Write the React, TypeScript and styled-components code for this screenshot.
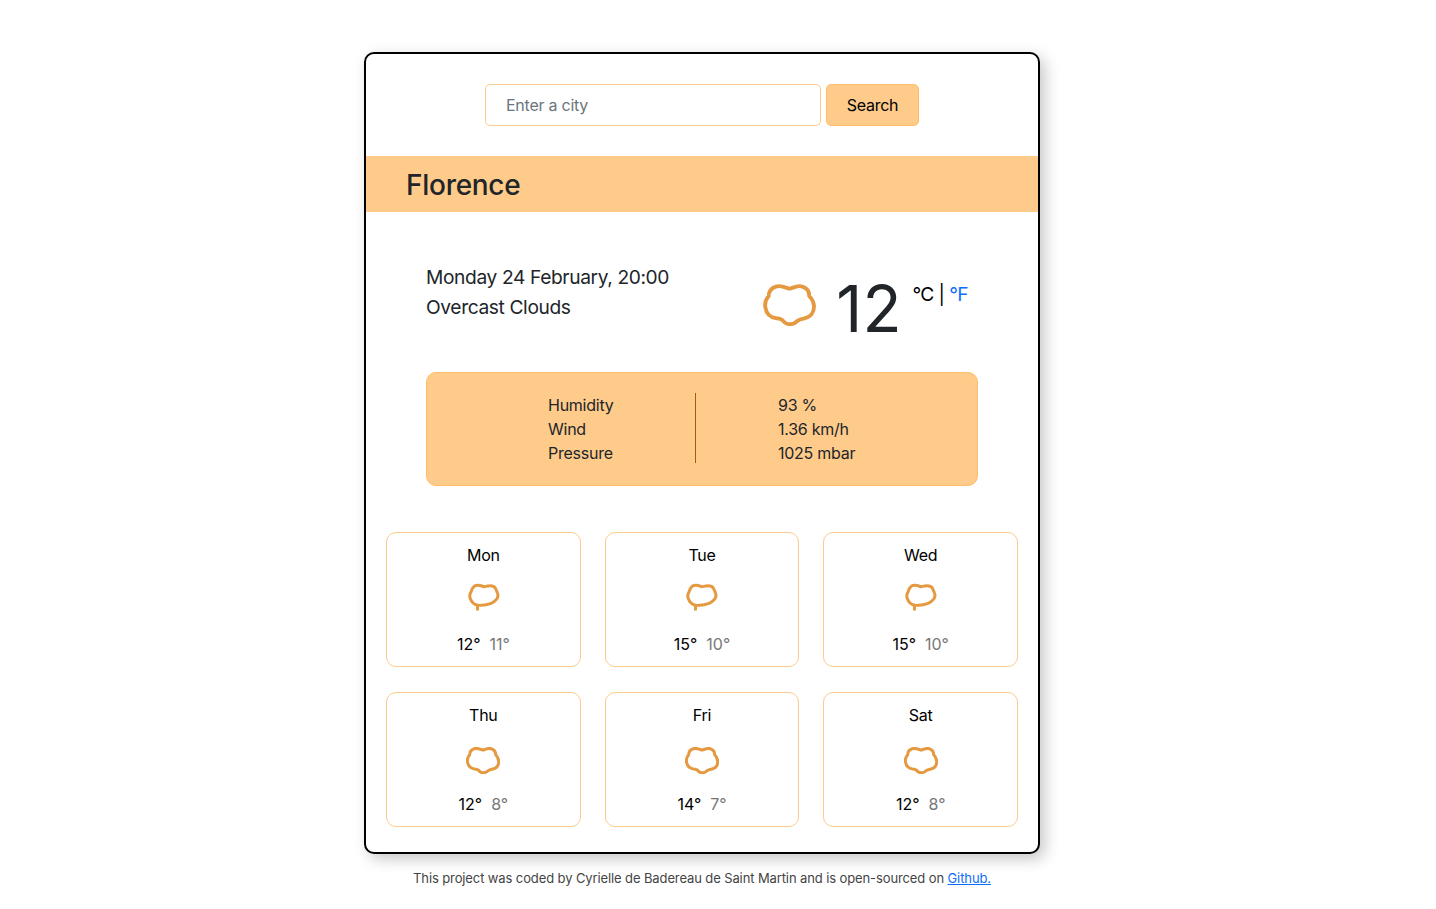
import React from 'react';
import styled, { createGlobalStyle } from 'styled-components';

interface Day {
  name: string;
  max: number;
  min: number;
  rainy?: boolean;
}

const days: Day[] = [
  { name: 'Mon', max: 12, min: 11, rainy: true },
  { name: 'Tue', max: 15, min: 10, rainy: true },
  { name: 'Wed', max: 15, min: 10, rainy: true },
  { name: 'Thu', max: 12, min: 8 },
  { name: 'Fri', max: 14, min: 7 },
  { name: 'Sat', max: 12, min: 8 },
];

const CloudIcon: React.FC<{ width: number; stroke: number }> = ({ width, stroke }) => (
  <svg width={width} height={(width * 126) / 158} viewBox="70 72 158 126" fill="none">
    <path
      d="M149 86C143 86 126 74 108 80C94 85 87 96 87 108C79 117 75 130 77 142C80 160 92 172 110 174C117 174 122 176 127 179C134 188 142 192 150 192C160 192 168 187 174 181C180 177 188 176 196 174C212 170 222 156 222 140C222 128 216 116 208 108C208 94 200 84 188 80C172 74 155 86 149 86Z"
      stroke="#e59a41"
      strokeWidth={stroke}
    />
  </svg>
);

const RainyCloudIcon: React.FC = () => (
  <svg width={33.3} height={29.3} viewBox="16.5 12 100 88" fill="none">
    <path
      d="M68 23C64 23 50 14 38 22C32 27 30 33 29 38C25 44 24 52 26 58C30 70 40 78 50 79C58 80 66 78 74 77C84 76 94 72 100 66C108 60 111 50 108 42C106 36 104 32 102 28C94 14 72 23 68 23Z"
      stroke="#e59a41"
      strokeWidth={9}
    />
    <path d="M48 80V91" stroke="#e59a41" strokeWidth={9} strokeLinecap="round" />
  </svg>
);

const App: React.FC = () => (
  <>
    <GlobalStyle />
    <Page>
      <Card>
        <SearchForm>
          <CityInput type="text" placeholder="Enter a city" />
          <SearchButton type="button">Search</SearchButton>
        </SearchForm>
        <CityBanner>Florence</CityBanner>
        <Current>
          <Summary>
            <div>Monday 24 February, 20:00</div>
            <div>Overcast Clouds</div>
          </Summary>
          <TempBlock>
            <TempIcon>
              <CloudIcon width={53} stroke={11.5} />
            </TempIcon>
            <Temp>12</Temp>
            <Units>
              °C | <UnitLink href="#">°F</UnitLink>
            </Units>
          </TempBlock>
        </Current>
        <InfoBox>
          <InfoLabels>
            <div>Humidity</div>
            <div>Wind</div>
            <div>Pressure</div>
          </InfoLabels>
          <InfoValues>
            <div>93 %</div>
            <div>1.36 km/h</div>
            <div>1025 mbar</div>
          </InfoValues>
        </InfoBox>
        <Forecast>
          {days.map((d) => (
            <DayCard key={d.name}>
              <DayName>{d.name}</DayName>
              <DayIcon $rainy={d.rainy}>
                {d.rainy ? <RainyCloudIcon /> : <CloudIcon width={34} stroke={14} />}
              </DayIcon>
              <DayTemps>
                <span>{d.max}°</span>
                <MinTemp>{d.min}°</MinTemp>
              </DayTemps>
            </DayCard>
          ))}
        </Forecast>
      </Card>
      <Footer>
        This project was coded by Cyrielle de Badereau de Saint Martin and is open-sourced on{' '}
        <a href="#">Github.</a>
      </Footer>
    </Page>
  </>
);

export default App;

const GlobalStyle = createGlobalStyle`
  * {
    box-sizing: border-box;
  }

  body {
    margin: 0;
    background: #fff;
    color: #212529;
    font-family: Inter, 'Liberation Sans', sans-serif;
    font-size: 16px;
    letter-spacing: -0.25px;
  }
`;

const Page = styled.div`
  width: 676px;
  margin: 52px 0 0 364px;
`;

const Card = styled.div`
  height: 802px;
  border: 2px solid #000;
  border-radius: 10px;
  box-shadow: 5px 5px 15px rgba(0, 0, 0, 0.22);
  overflow: hidden;
  background: #fff;
`;

const SearchForm = styled.form`
  display: flex;
  justify-content: center;
  gap: 5px;
  padding: 30px 0;
  height: 102px;
`;

const CityInput = styled.input`
  width: 336px;
  height: 42px;
  padding: 0 20px;
  border: 1px solid #fecb8b;
  border-radius: 5px;
  font: inherit;
  letter-spacing: -0.25px;
  color: #212529;
  outline: none;

  &::placeholder {
    color: #6c757d;
  }
`;

const SearchButton = styled.button`
  width: 93px;
  height: 42px;
  padding: 0;
  border: 1px solid #ffbd6b;
  border-radius: 5px;
  background: #fecb8b;
  color: #000;
  font: inherit;
  letter-spacing: -0.3px;
`;

const CityBanner = styled.h1`
  margin: 0;
  height: 56px;
  padding-left: 40px;
  background: #fecb8b;
  font-size: 28px;
  font-weight: 500;
  line-height: 58px;
  letter-spacing: -0.28px;
`;

const Current = styled.div`
  display: flex;
  justify-content: space-between;
  height: 160px;
  padding: 50px 70px 0 60px;
`;

const Summary = styled.div`
  font-size: 19.2px;
  line-height: 30px;
  letter-spacing: -0.38px;
`;

const TempBlock = styled.div`
  display: flex;
  align-items: flex-start;
  margin-top: 18px;
`;

const TempIcon = styled.div`
  margin-top: 4px;
`;

const Temp = styled.div`
  margin-left: 20px;
  font-size: 64px;
  line-height: 58px;
  font-weight: 400;
  letter-spacing: 0;
`;

const Units = styled.div`
  margin: -1px 0 0 11px;
  font-size: 19.2px;
  line-height: 30px;
  letter-spacing: -0.6px;
  color: #000;
`;

const UnitLink = styled.a`
  color: #0d6efd;
  text-decoration: none;
`;

const InfoBox = styled.div`
  display: grid;
  grid-template-columns: 269px 1fr;
  height: 114px;
  margin: 0 60px;
  padding: 20px 0;
  border: 1px solid #ffbd6b;
  border-radius: 10px;
  background: #fecb8b;
  line-height: 24px;
`;

const InfoLabels = styled.div`
  height: 70px;
  padding-left: 121px;
  border-right: 1px solid #a85a14;
`;

const InfoValues = styled.div`
  padding-left: 82px;
`;

const Forecast = styled.div`
  display: grid;
  grid-template-columns: repeat(3, 1fr);
  grid-auto-rows: 135px;
  column-gap: 24px;
  row-gap: 25px;
  margin-top: 46px;
  padding: 0 20px;
`;

const DayCard = styled.div`
  display: flex;
  flex-direction: column;
  align-items: center;
  padding-top: 10px;
  border: 1px solid #fecb8b;
  border-radius: 10px;
`;

const DayName = styled.div`
  line-height: 24px;
  color: #000;
`;

const DayIcon = styled.div<{ $rainy?: boolean }>`
  display: flex;
  align-items: flex-start;
  justify-content: center;
  height: 36px;
  margin-top: 15px;
  padding-top: ${(p) => (p.$rainy ? '1px' : '5px')};
`;

const DayTemps = styled.div`
  display: flex;
  gap: 9px;
  margin-top: 14px;
  line-height: 24px;
  letter-spacing: 0;
  color: #000;
`;

const MinTemp = styled.span`
  color: #777;
`;

const Footer = styled.div`
  margin-top: 15px;
  text-align: center;
  font-size: 13px;
  line-height: 18px;
  letter-spacing: -0.11px;
  color: #444;

  a {
    color: #0d6efd;
  }
`;
